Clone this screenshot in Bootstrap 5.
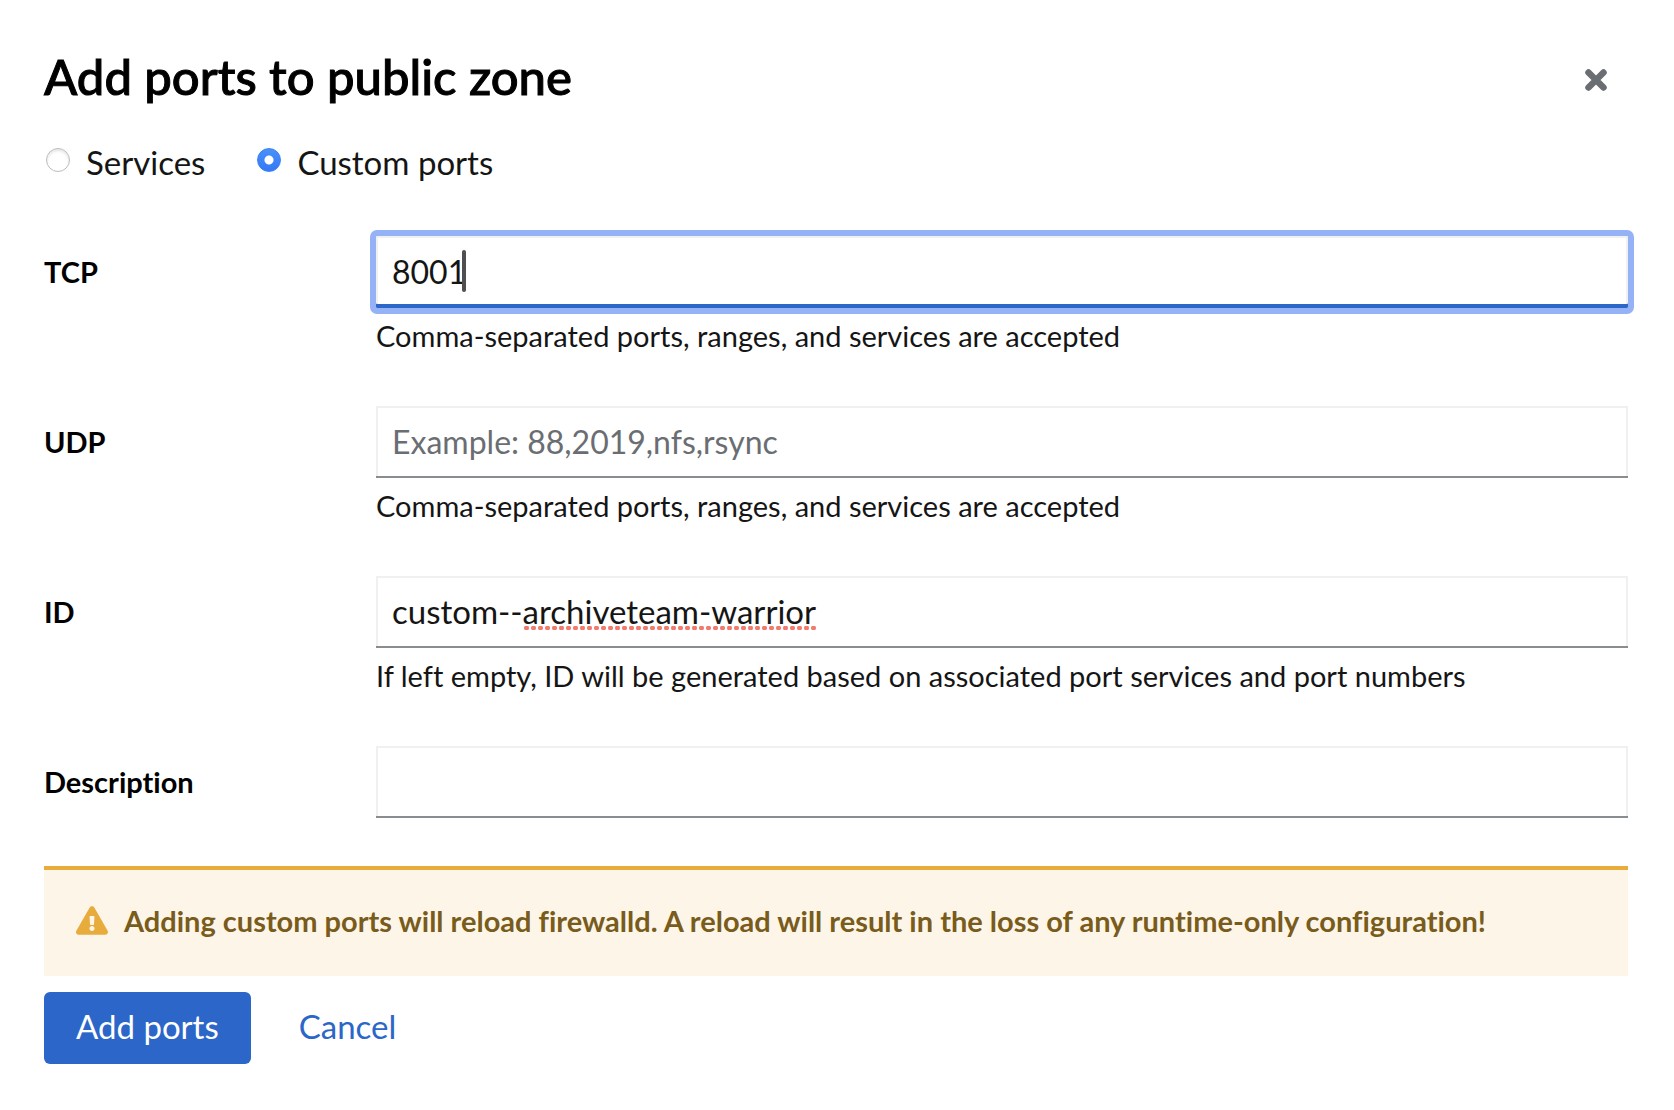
<!DOCTYPE html>
<html lang="en">
<head>
<meta charset="utf-8">
<meta name="viewport" content="width=device-width, initial-scale=1">
<title>Add ports to public zone</title>
<link href="https://cdn.jsdelivr.net/npm/bootstrap@5.3.0/dist/css/bootstrap.min.css" rel="stylesheet">
<style>
  body { font-family: Lato, "Open Sans", sans-serif; font-size: 33px; line-height: 48px; font-variant-ligatures: none; color: #151515; background: #fff; }
  .ports-dialog { padding: 48px 46px 46px 44px; }
  .dialog-title { font-size: 49px; line-height: 56px; font-weight: 500; color: #000; -webkit-text-stroke: 1px #000; }
  .dialog-close { width: 64px; height: 64px; color: #6a6e73; }
  .mode-choices { gap: 50px; margin-top: 26px; margin-bottom: 50px; }
  .mode-option { gap: 16px; }
  .mode-radio.form-check-input { width: 24px; height: 24px; margin: 0 0 4px 2px; border: 1px solid #bdbdbd; box-shadow: inset 0 2px 3px #e4e4e4; }
  .mode-radio.form-check-input:checked { background: radial-gradient(circle, #fff 0 4px, transparent 5px), linear-gradient(#4a90f8, #3478f6); border-color: #3b82f7; box-shadow: none; }
  .port-form { gap: 48px; }
  .port-row { display: grid; grid-template-columns: 332px minmax(0, 1fr); }
  .port-label { font-size: 29px; line-height: 40px; font-weight: 700; color: #000; padding-top: 16px; }
  .port-input.form-control { height: 72px; padding: 0 16px 2px; font-size: 33px; line-height: 48px; color: #151515; border: 0; border-radius: 0; box-shadow: inset 0 -2px #8a8d90, inset 0 0 0 2px #f0f0f0; }
  .port-input.form-control::placeholder { font-size: 32px; color: #6a6e73; opacity: 1; }
  .port-input.port-active.form-control { font-size: 32px; border-radius: 1px; box-shadow: inset 0 -4px #2b66c8, inset 0 0 0 2px #f0f0f0; outline: 6px solid #94b2f5; caret-color: transparent; }
  .port-hint { font-size: 29px; line-height: 40px; margin-top: 8px; margin-bottom: 2px; }
  .text-caret { left: 86px; top: 14px; width: 4px; height: 42px; border-radius: 2px; background: #4f4f4f; }
  .spell-marks { left: 147px; top: 50px; width: 294px; height: 4px; background: radial-gradient(circle, #f27a6e 0 2px, transparent 3px) 0 0 / 7px 4px repeat-x; }
  .reload-alert { gap: 16px; margin-top: 48px; padding: 30px 32px; min-height: 110px; border-top: 4px solid #e8ac3d; background: #fdf6e8; color: #795b1c; font-size: 29px; line-height: 42px; font-weight: 700; }
  .alert-mark { width: 32px; height: 29px; margin-top: 6px; }
  .dialog-actions { gap: 16px; margin-top: 16px; }
  .dialog-actions .btn { height: 72px; padding: 0 32px 4px; font-size: 33px; line-height: 48px; border: 0; border-radius: 6px; }
  .btn-add, .btn-add:hover { background: #2b66c8; color: #fff; }
  .btn-cancel, .btn-cancel:hover { color: #2b66c8; }
</style>
</head>
<body>
<main class="ports-dialog">
  <header class="d-flex justify-content-between">
    <h1 class="dialog-title mb-0">Add ports to public zone</h1>
    <button type="button" class="dialog-close btn p-0 border-0 d-flex align-items-center justify-content-center" aria-label="Close">
      <svg width="22" height="22" viewBox="0 0 22 22" aria-hidden="true"><path d="M3.500 3.500l15 15M18.500 3.500l-15 15" stroke="currentColor" stroke-width="6.500" stroke-linecap="round"/></svg>
    </button>
  </header>
  <form>
    <div class="mode-choices d-flex flex-wrap">
      <div class="mode-option d-flex align-items-center">
        <input class="mode-radio form-check-input" type="radio" name="mode" id="mode-services">
        <label for="mode-services">Services</label>
      </div>
      <div class="mode-option d-flex align-items-center">
        <input class="mode-radio form-check-input" type="radio" name="mode" id="mode-custom" checked>
        <label for="mode-custom">Custom ports</label>
      </div>
    </div>
    <div class="port-form d-flex flex-column">
      <div class="port-row">
        <label class="port-label" for="tcp">TCP</label>
        <div class="position-relative">
          <input class="port-input port-active form-control" id="tcp" type="text" value="8001">
          <span class="text-caret position-absolute"></span>
          <div class="port-hint">Comma-separated ports, ranges, and services are accepted</div>
        </div>
      </div>
      <div class="port-row">
        <label class="port-label" for="udp">UDP</label>
        <div>
          <input class="port-input form-control" id="udp" type="text" placeholder="Example: 88,2019,nfs,rsync">
          <div class="port-hint">Comma-separated ports, ranges, and services are accepted</div>
        </div>
      </div>
      <div class="port-row">
        <label class="port-label" for="port-id">ID</label>
        <div class="position-relative">
          <input class="port-input form-control" id="port-id" type="text" value="custom--archiveteam-warrior">
          <span class="spell-marks position-absolute"></span>
          <div class="port-hint">If left empty, ID will be generated based on associated port services and port numbers</div>
        </div>
      </div>
      <div class="port-row">
        <label class="port-label" for="description">Description</label>
        <input class="port-input form-control" id="description" type="text">
      </div>
    </div>
    <div class="reload-alert d-flex" role="alert">
      <svg class="alert-mark flex-shrink-0" viewBox="0 0 576 512" aria-hidden="true"><path fill="#e8ac3d" d="M569.500 440c18.500 32-4.700 72-41.600 72H48c-36.900 0-60-40-41.600-72L246.400 24c18.500-32 64.700-32 83.200 0l240 416zM288 354c-25.400 0-46 20.600-46 46s20.600 46 46 46 46-20.600 46-46-20.600-46-46-46zm-43.700-165.300l7.400 136c.3 6.400 5.600 11.300 12 11.300h48.500c6.400 0 11.600-5 12-11.300l7.400-136c.4-6.900-5.100-12.700-12-12.700h-63.400c-6.900 0-12.300 5.800-12 12.700z"/></svg>
      <div>Adding custom ports will reload firewalld. A reload will result in the loss of any runtime-only configuration!</div>
    </div>
    <div class="dialog-actions d-flex">
      <button type="submit" class="btn btn-add">Add ports</button>
      <button type="button" class="btn btn-cancel">Cancel</button>
    </div>
  </form>
</main>
<script src="https://cdn.jsdelivr.net/npm/bootstrap@5.3.0/dist/js/bootstrap.bundle.min.js"></script>
</body>
</html>
